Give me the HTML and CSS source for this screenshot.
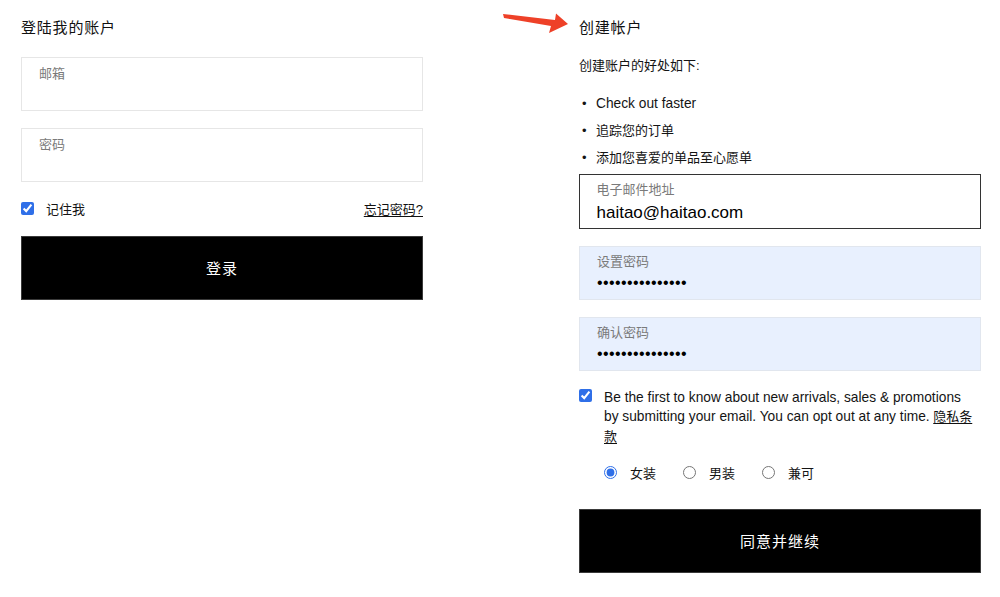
FILE: index.html
```html
<!DOCTYPE html>
<html lang="zh-CN">
<head>
<meta charset="utf-8">
<title>登陆 / 创建帐户</title>
<link rel="stylesheet" href="styles.css">
</head>
<body>
<div class="page">
  <svg class="arrow" width="80" height="35" viewBox="0 0 80 35" aria-hidden="true">
    <polygon points="8,9 60,15 61,8.5 73,19 54,28 56,21 9,13" fill="#ee4128"/>
  </svg>

  <section class="col">
    <h2 class="title">登陆我的账户</h2>
    <div class="field first">
      <label>邮箱</label>
      <input class="value" type="email">
    </div>
    <div class="field">
      <label>密码</label>
      <input class="value" type="password">
    </div>
    <div class="remember">
      <label class="check"><input type="checkbox" checked><span>记住我</span></label>
      <a class="link" href="#">忘记密码?</a>
    </div>
    <button class="btn">登录</button>
  </section>

  <section class="col">
    <h2 class="title">创建帐户</h2>
    <p class="intro">创建账户的好处如下:</p>
    <ul class="benefits">
      <li><span class="en">Check out faster</span></li>
      <li>追踪您的订单</li>
      <li>添加您喜爱的单品至心愿单</li>
    </ul>
    <div class="field focus">
      <label>电子邮件地址</label>
      <input class="value email" type="text" value="haitao@haitao.com">
    </div>
    <div class="field filled">
      <label>设置密码</label>
      <div class="dots">•••••••••••••••</div>
    </div>
    <div class="field filled">
      <label>确认密码</label>
      <div class="dots">•••••••••••••••</div>
    </div>
    <div class="consent">
      <input type="checkbox" checked>
      <p class="consent-text"><span class="en">Be the first to know about new arrivals, sales &amp; promotions by submitting your email. You can opt out at any time.</span> <a class="link" href="#">隐私条款</a></p>
    </div>
    <div class="radios">
      <label class="radio"><input type="radio" name="g" checked><span>女装</span></label>
      <label class="radio"><input type="radio" name="g"><span>男装</span></label>
      <label class="radio"><input type="radio" name="g"><span>兼可</span></label>
    </div>
    <button class="btn">同意并继续</button>
  </section>
</div>
</body>
</html>
```

FILE: styles.css
```css
*, *::before, *::after { box-sizing: border-box; }

body {
  margin: 0;
  background: #fff;
  color: #141414;
  font-family: "Liberation Sans", "Noto Sans CJK SC", sans-serif;
  font-size: 13px;
}

.page {
  position: relative;
  display: grid;
  grid-template-columns: 402px 402px;
  column-gap: 156px;
  padding: 18px 0 0 21px;
}

.arrow {
  position: absolute;
  left: 495px;
  top: 5px;
}

.col {
  display: flex;
  flex-direction: column;
}

.title {
  margin: 0;
  font-size: 15px;
  line-height: 19px;
  font-weight: normal;
  letter-spacing: 0.8px;
  color: #111;
}

.en { font-size: 13.75px; }

.field {
  height: 54px;
  margin-top: 17px;
  border: 1px solid #e6e6e6;
  padding: 8px 17px 0;
}

.field.first { margin-top: 20px; }

.field label {
  display: block;
  font-size: 13px;
  line-height: 16px;
  color: #7a7a7a;
}

.value {
  display: block;
  width: 100%;
  margin: 4px 0 0;
  padding: 0;
  border: 0;
  outline: none;
  background: transparent;
  font-family: inherit;
  font-size: 17px;
  line-height: 20px;
  height: 20px;
  color: #000;
}

.field.focus .value { margin-top: 5px; }

.remember {
  display: flex;
  justify-content: space-between;
  align-items: center;
  height: 20px;
  margin-top: 16px;
}

.check {
  display: flex;
  align-items: center;
  gap: 12px;
}

input[type="checkbox"],
input[type="radio"] {
  width: 13px;
  height: 13px;
  margin: 0;
  accent-color: #2f6fe8;
  flex: none;
}

.link {
  color: #111;
  text-decoration: underline;
  text-underline-offset: 2px;
}

.btn {
  display: block;
  width: 100%;
  height: 64px;
  margin-top: 18px;
  padding-bottom: 2px;
  border: 1px solid #3a3a3a;
  background: #000;
  color: #fff;
  font-family: inherit;
  font-size: 15px;
  letter-spacing: 1px;
  cursor: pointer;
}

.intro {
  margin: 19px 0 0;
  line-height: 20px;
}

.benefits {
  list-style: none;
  margin: 13.5px 0 0;
  padding: 0;
}

.benefits li {
  display: flex;
  line-height: 27px;
}

.benefits li::before {
  content: "•";
  flex: none;
  width: 17px;
  padding-left: 3px;
  font-size: 13px;
}

.field.focus {
  height: 55px;
  margin-top: 3.5px;
  border: 1.5px solid #333;
  padding: 7px 16.5px 0;
}

.field.filled {
  margin-top: 17px;
  background: #e8f0fe;
  border-color: #e1e6ee;
  padding-top: 7px;
}

.dots {
  margin-top: 3px;
  font-size: 16px;
  line-height: 20px;
  letter-spacing: 0.4px;
  color: #000;
}

.consent {
  display: flex;
  align-items: flex-start;
  gap: 12px;
  margin-top: 16.5px;
}

.consent input { margin-top: 1.5px; }

.consent-text {
  margin: 0;
  width: 374px;
  line-height: 19.5px;
}

.radios {
  display: flex;
  align-items: center;
  gap: 27px;
  height: 20px;
  margin-top: 16px;
  padding-left: 25px;
}

.radio {
  display: flex;
  align-items: center;
  gap: 13px;
}

.col .radios + .btn { margin-top: 27px; }
```
